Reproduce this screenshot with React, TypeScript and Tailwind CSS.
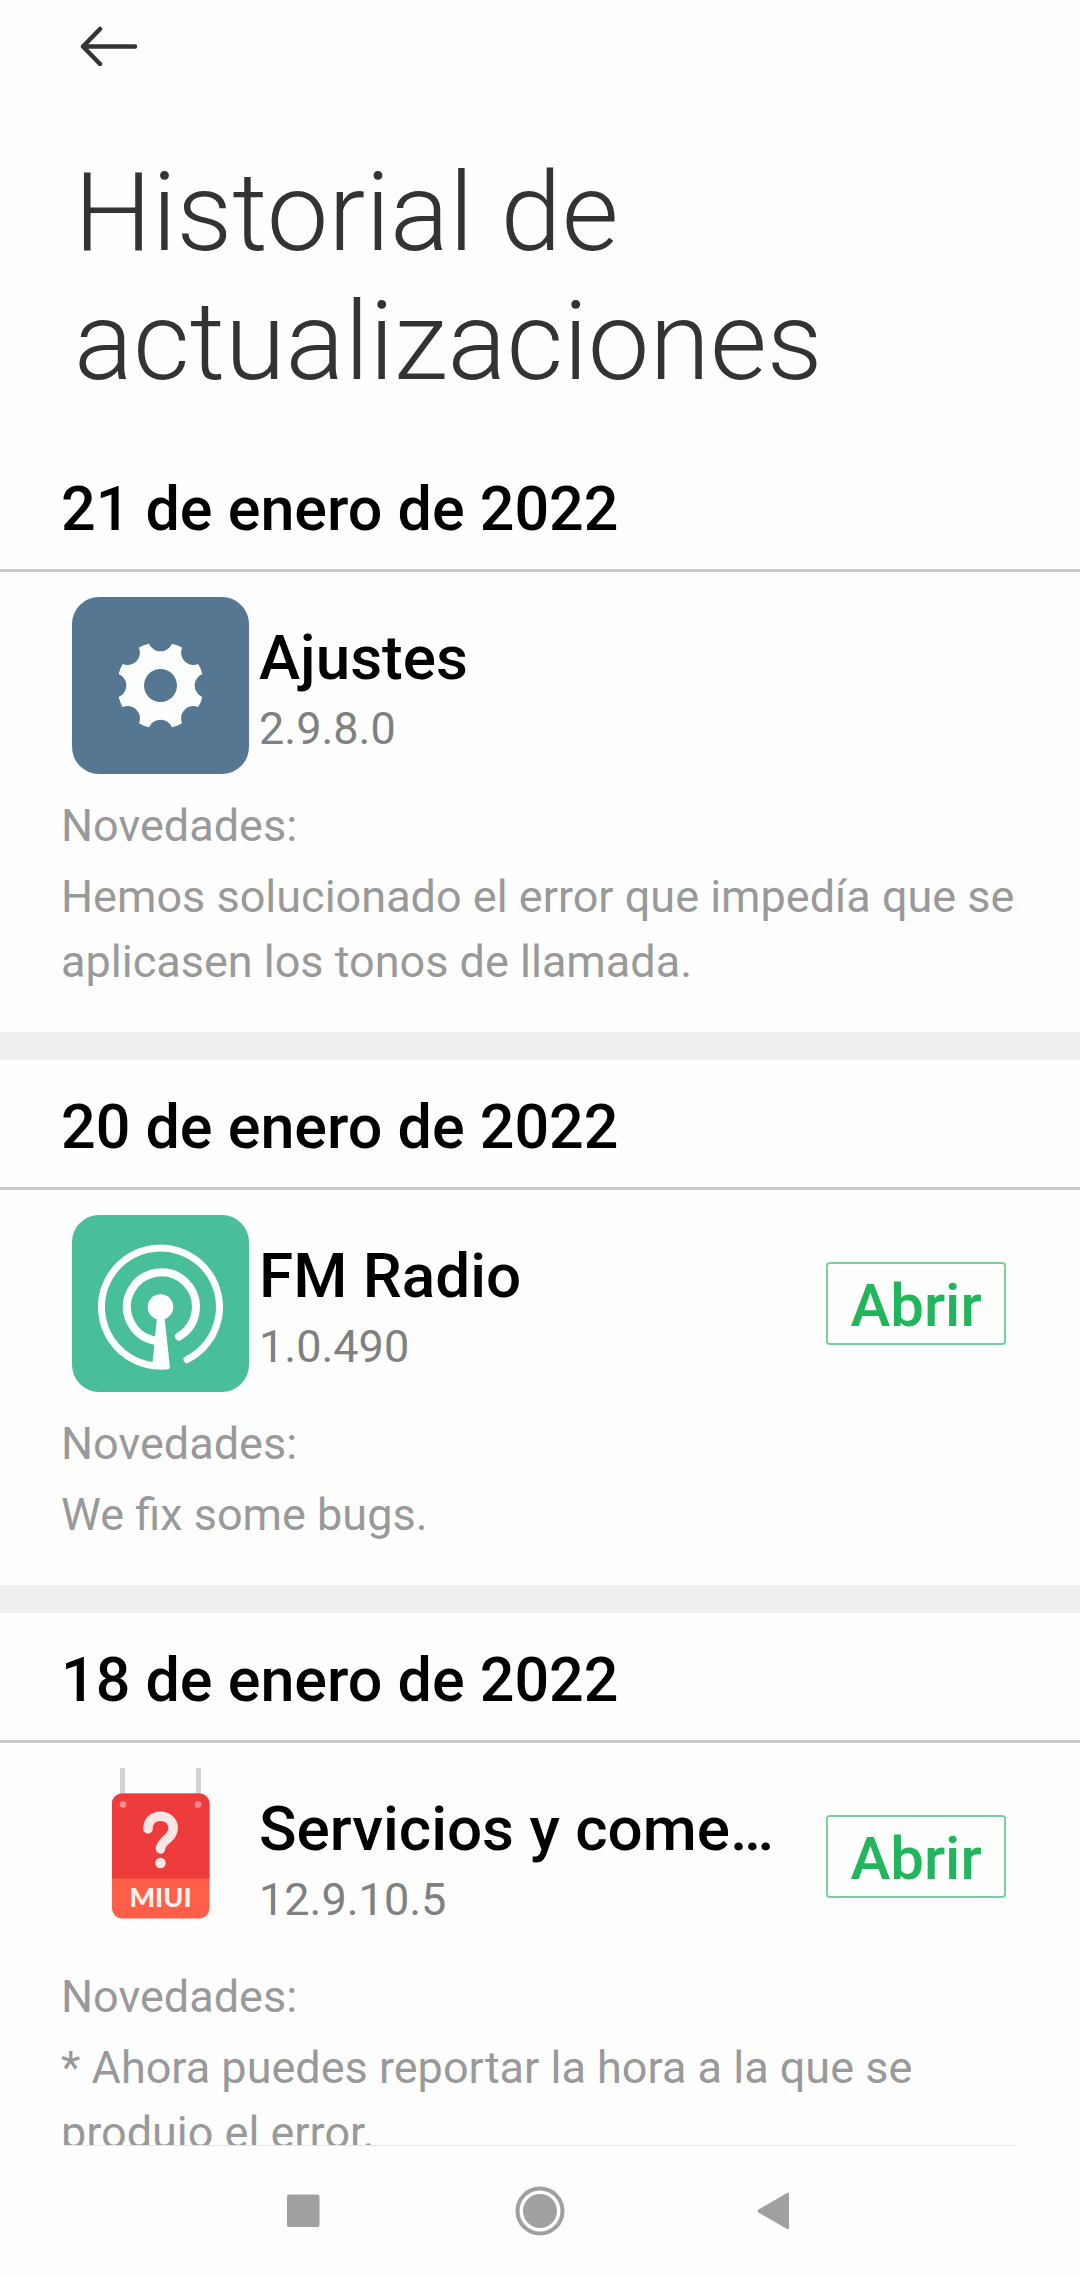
import React from "react";

interface Update {
  date: string;
  name: string;
  version: string;
  notes: string;
  icon: React.ReactNode;
  canOpen: boolean;
}

const SettingsIcon: React.FC = () => (
  <svg viewBox="0 0 177 177" className="w-full h-full" aria-hidden="true">
    <rect width="177" height="177" rx="27" fill="#557791" />
    <circle cx="88.5" cy="88.5" r="43.5" fill="#fdfffe" />
    <circle cx="88.5" cy="88.5" r="16.5" fill="#557791" />
    {[0, 45, 90, 135, 180, 225, 270, 315].map((angle) => (
      <circle
        key={angle}
        cx="88.5"
        cy="42"
        r="12.3"
        fill="#557791"
        transform={`rotate(${angle} 88.5 88.5)`}
      />
    ))}
  </svg>
);

const RadioIcon: React.FC = () => (
  <svg viewBox="0 0 177 177" className="w-full h-full" aria-hidden="true">
    <rect width="177" height="177" rx="27" fill="#48be9b" />
    <g fill="none" stroke="#fff" strokeLinecap="round">
      <path d="M88.5 151A59 59 0 1 1 115 144.7" strokeWidth="7" />
      <path d="M82 125.5A34.5 34.5 0 1 1 107 121.5" strokeWidth="8" />
    </g>
    <circle cx="88.5" cy="92" r="12.8" fill="#fff" />
    <path d="M85 102h7.5l5.3 49q.3 3.5-3 3.5H88l-8-1.5z" fill="#fff" />
  </svg>
);

const MiuiServicesIcon: React.FC = () => (
  <svg viewBox="0 0 177 177" className="w-full h-full" aria-hidden="true">
    <path d="M50.5 0v28M126.5 0v28" stroke="#d3d3d3" strokeWidth="5" />
    <rect x="40" y="25.5" width="97.5" height="125" rx="10" fill="#ff5f48" />
    <path d="M40 110.5v-75a10 10 0 0 1 10-10h77.5a10 10 0 0 1 10 10v75z" fill="#ee3c3c" />
    <circle cx="51" cy="36.5" r="3.3" fill="#ff8a8a" />
    <circle cx="126" cy="36.5" r="3.3" fill="#ff8a8a" />
    <path
      d="M76 61C76 52.500 81.500 48.200 88.500 48.200C96 48.200 101.200 53.500 101.200 60C101.200 71 88.700 72 88.500 81"
      fill="none"
      stroke="#ffe6e6"
      strokeWidth="9.5"
      strokeLinecap="round"
    />
    <circle cx="88.5" cy="95" r="5.2" fill="#ffe6e6" />
    <text x="88.5" y="139" textAnchor="middle" fontSize="27" className="font-[Lato] font-black" fill="#fff0ec">
      MIUI
    </text>
  </svg>
);

const updates: Update[] = [
  {
    date: "21 de enero de 2022",
    name: "Ajustes",
    version: "2.9.8.0",
    notes: "Hemos solucionado el error que impedía que se aplicasen los tonos de llamada.",
    icon: <SettingsIcon />,
    canOpen: false,
  },
  {
    date: "20 de enero de 2022",
    name: "FM Radio",
    version: "1.0.490",
    notes: "We fix some bugs.",
    icon: <RadioIcon />,
    canOpen: true,
  },
  {
    date: "18 de enero de 2022",
    name: "Servicios y come…",
    version: "12.9.10.5",
    notes: "* Ahora puedes reportar la hora a la que se produjo el error.",
    icon: <MiuiServicesIcon />,
    canOpen: true,
  },
];

const UpdateSection: React.FC<{ update: Update }> = ({ update }) => (
  <section className="border-b-[28px] border-[#eeeeee]">
    <h2 className="px-[61px] pt-[31px] pb-6 text-[61px] leading-[72px] font-medium text-black border-b-3 border-[#c9c9c9]">
      {update.date}
    </h2>
    <div className="flex gap-[10px] pt-[25px] pl-[72px] pr-[74px]">
      <div className="w-[177px] h-[177px] shrink-0">{update.icon}</div>
      <div className="flex flex-col gap-2 flex-1 min-w-0 pt-[25px]">
        <h3 className="text-[62px] leading-[72px] font-medium text-black truncate">{update.name}</h3>
        <p className="text-[45px] leading-[53px] text-[#808080]">{update.version}</p>
      </div>
      {update.canOpen && (
        <button
          type="button"
          className="self-center shrink-0 ml-6 w-[180px] h-[83px] pt-1 border-2 border-[#7bcf9b] rounded text-[60px] leading-[72px] font-medium text-[#22b65c]"
        >
          Abrir
        </button>
      )}
    </div>
    <div className="flex flex-col gap-[6px] px-[61px] pt-[19px] pb-[38px] text-[45px] leading-[65px] text-[#999999]">
      <p>Novedades:</p>
      <p>{update.notes}</p>
    </div>
  </section>
);

const App: React.FC = () => {
  return (
    <div className="flex flex-col h-screen bg-[#fefefe] font-[Roboto,sans-serif]">
      <header className="pb-9">
        <button type="button" aria-label="Atrás" className="block ml-[79px] pt-[26px] mb-[82px]">
          <svg width="60" height="40" viewBox="0 0 60 40" fill="none" stroke="#333" strokeWidth="4.5" strokeLinecap="round" strokeLinejoin="round">
            <path d="M21 3L4 20.500L21 38M4 20.500H56" />
          </svg>
        </button>
        <h1 className="px-[74px] text-[110px] leading-[129px] font-light text-[#333333]">
          Historial de actualizaciones
        </h1>
      </header>

      <main className="flex-1 min-h-0 overflow-hidden">
        {updates.map((update) => (
          <UpdateSection key={update.date} update={update} />
        ))}
      </main>

      <nav className="shrink-0 h-[130px] px-[64px]">
        <div className="border-t border-[#e6e6e6]" />
        <div className="flex justify-between items-center h-[129px] px-[208px]">
          <button type="button" aria-label="Recientes">
            <svg width="60" height="60" viewBox="0 0 60 60" fill="#a0a0a0">
              <rect x="15" y="13.5" width="32.5" height="32.5" rx="2" />
            </svg>
          </button>
          <button type="button" aria-label="Inicio">
            <svg width="60" height="60" viewBox="0 0 60 60" fill="#a0a0a0">
              <circle cx="30" cy="30" r="17" />
              <circle cx="30" cy="30" r="22.5" fill="none" stroke="#a0a0a0" strokeWidth="4" />
            </svg>
          </button>
          <button type="button" aria-label="Volver">
            <svg width="60" height="60" viewBox="0 0 60 60" fill="#a0a0a0">
              <path d="M10.500 28.500L39 12Q41 11 41 13V47Q41 49 39 48L10.500 31.500Q8.500 30 10.500 28.500Z" />
            </svg>
          </button>
        </div>
      </nav>
    </div>
  );
};

export default App;
